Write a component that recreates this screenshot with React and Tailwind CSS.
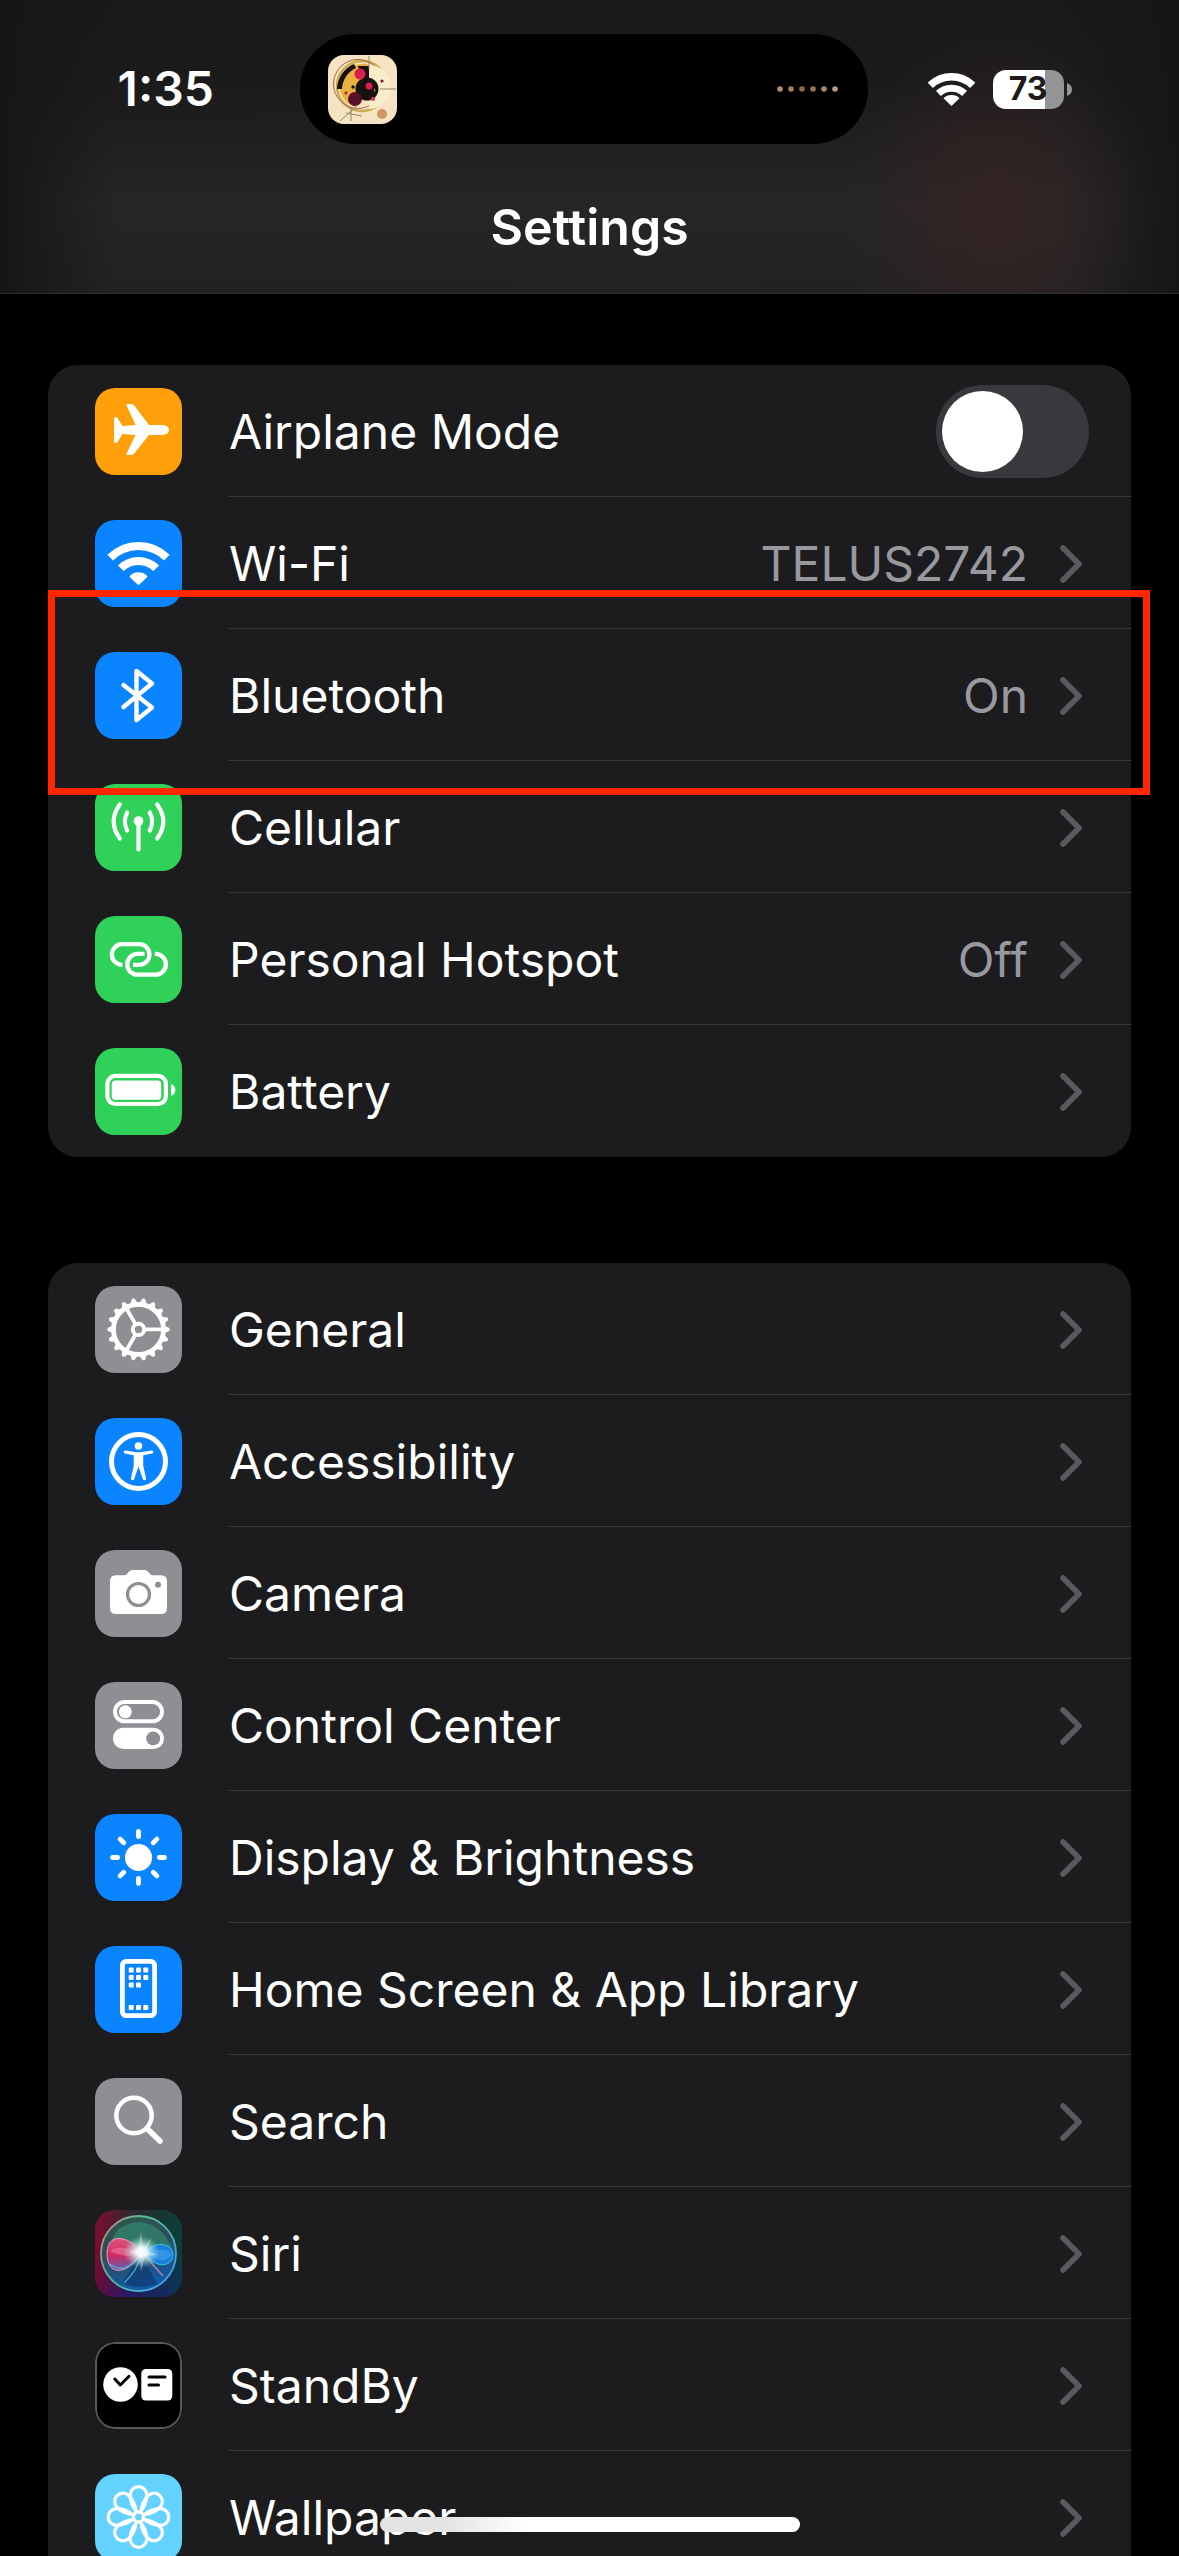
import { useState } from 'react';

const Glyph = ({ children }) => (
  <svg viewBox="0 0 87 87" fill="none" className="size-full" aria-hidden="true">
    {children}
  </svg>
);

const AirplaneIcon = () => (
  <Glyph>
    <path
      fill="#fff"
      d="M31.5 17.5Q30.8 16 33 16H36Q38 16 39.2 17.5L54 37H67Q74 37.5 74 42Q74 46.5 67 47H54L39.2 65.5Q38 67 36 67H33Q30.8 67 31.5 65.5L40.5 47L27.5 46L22.5 54Q21.8 55 20.5 55Q19 55 19 53.5V30.5Q19 29 20.5 29Q21.8 29 22.5 30L27.5 38L40.5 37Z"
    />
  </Glyph>
);

const WifiIcon = () => (
  <Glyph>
    <g stroke="#fff" strokeWidth="8">
      <path d="M15.2 37.7A40 40 0 0 1 71.8 37.7" />
      <path d="M25.8 48.3A25 25 0 0 1 61.2 48.3" />
    </g>
    <path
      fill="#fff"
      d="M42.3 64.3L34.8 57Q34.2 56.3 35 55.7Q38.5 52.3 43.5 52.3Q48.5 52.3 52 55.7Q52.8 56.3 52.2 57L44.7 64.3Q43.5 65.3 42.3 64.3Z"
    />
  </Glyph>
);

const BluetoothIcon = () => (
  <Glyph>
    <path
      stroke="#fff"
      strokeWidth="4.4"
      strokeLinecap="round"
      strokeLinejoin="round"
      d="M28.5 33L57 55.5L41.5 68V19L57 31.5L28.5 55"
    />
  </Glyph>
);

const CellularIcon = () => (
  <Glyph>
    <g stroke="#fff" strokeWidth="4.2" strokeLinecap="round">
      <path d="M32.2 28.5Q27.5 37.5 32.2 46.5" />
      <path d="M54.8 28.5Q59.5 37.5 54.8 46.5" />
      <path d="M24.8 20.5Q12.5 37.5 24.8 54.5" />
      <path d="M62.2 20.5Q74.5 37.5 62.2 54.5" />
      <path d="M43.5 37V65.5" />
    </g>
    <circle cx="43.5" cy="37" r="4.8" fill="#fff" />
  </Glyph>
);

const HotspotIcon = () => (
  <Glyph>
    <g stroke="#fff" strokeWidth="4.3">
      <path d="M27.5 48.8A10.3 10.3 0 0 1 26.8 28.2H44.2A10.3 10.3 0 0 1 44.2 48.8H38" />
      <path d="M49.5 37.9H42.6A10.4 10.4 0 0 0 42.6 58.7H60.5A10.4 10.4 0 0 0 60.5 37.9H59.8" />
    </g>
  </Glyph>
);

const BatteryIcon = () => (
  <Glyph>
    <rect x="12.4" y="27.8" width="58.5" height="28.2" rx="8" stroke="#fff" strokeWidth="4.2" />
    <rect x="16.7" y="32.5" width="49.5" height="19.3" rx="3.5" fill="#fff" />
    <path fill="#fff" d="M76 36Q80.3 37.5 80.3 41.9Q80.3 46.3 76 47.8Z" />
  </Glyph>
);

const GearIcon = () => (
  <Glyph>
    <g transform="translate(43.5 43.4)">
      {Array.from({ length: 18 }, (_, i) => (
        <path key={i} fill="#fff" d="M25-4L30.5-1.7Q32.2 0 30.5 1.7L25 4Z" transform={`rotate(${i * 20})`} />
      ))}
      <circle r="25" stroke="#fff" strokeWidth="4.8" />
      <circle r="5.7" stroke="#fff" strokeWidth="4" />
      {[0, 120, 240].map((a) => (
        <path key={a} d="M7 0H25" stroke="#fff" strokeWidth="3.8" transform={`rotate(${a})`} />
      ))}
    </g>
  </Glyph>
);

const AccessibilityIcon = () => (
  <Glyph>
    <circle cx="43.5" cy="43.5" r="27" stroke="#fff" strokeWidth="5" />
    <circle cx="43.5" cy="28" r="3.8" fill="#fff" />
    <path
      fill="#fff"
      d="M30.5 32.5L40 34Q43.5 34.5 47 34L56.5 32.5Q58.2 32.4 58.3 34Q58.3 35.3 57 35.6L48.3 37.3L48.2 47.5L51 60.5Q51.1 62 49.7 62.3Q48.4 62.5 47.9 61.2L43.5 48.5L39.1 61.2Q38.6 62.5 37.3 62.3Q35.9 62 36 60.5L38.8 47.5L38.7 37.3L30 35.6Q28.7 35.3 28.7 34Q28.8 32.4 30.5 32.5Z"
    />
  </Glyph>
);

const CameraIcon = () => (
  <Glyph>
    <path
      fill="#fff"
      d="M21 25.3H29Q31 25.3 32.2 23.8L34 21.6Q35.2 20 37.5 20H49.5Q51.8 20 53 21.6L54.8 23.8Q56 25.3 58 25.3H66Q72 25.3 72 31.3V58Q72 64 66 64H21Q15 64 15 58V31.3Q15 25.3 21 25.3Z"
    />
    <circle cx="43.5" cy="44.5" r="11" stroke="#8e8e93" strokeWidth="3.2" />
    <circle cx="63" cy="34.7" r="3" fill="#8e8e93" />
  </Glyph>
);

const ControlCenterIcon = () => (
  <Glyph>
    <rect x="20" y="20" width="47" height="19.3" rx="9.6" stroke="#fff" strokeWidth="4" />
    <circle cx="30.3" cy="29.8" r="6.5" fill="#fff" />
    <rect x="18" y="45.7" width="51" height="21.3" rx="10.6" fill="#fff" />
    <circle cx="58.2" cy="56.4" r="7" fill="#8e8e93" />
  </Glyph>
);

const BrightnessIcon = () => (
  <Glyph>
    <g transform="translate(43.5 43.5)">
      <circle r="13.6" fill="#fff" />
      {[0, 45, 90, 135, 180, 225, 270, 315].map((a) => (
        <path key={a} d="M20.8 0H26" stroke="#fff" strokeWidth="4.8" strokeLinecap="round" transform={`rotate(${a})`} />
      ))}
    </g>
  </Glyph>
);

const HomeScreenIcon = () => {
  const dots = [
    [0, 0], [1, 0], [2, 0],
    [0, 1], [1, 1], [2, 1],
    [0, 2], [1, 2],
    [0, 5], [1, 5], [2, 5],
  ];
  return (
    <Glyph>
      <rect x="27.4" y="15.4" width="32.2" height="54.3" rx="4" stroke="#fff" strokeWidth="4.8" />
      {dots.map(([c, r]) => (
        <rect key={`${c}-${r}`} x={33.7 + c * 7.3} y={21.5 + r * 7.5} width="5" height="5" rx="1" fill="#fff" />
      ))}
    </Glyph>
  );
};

const SearchIcon = () => (
  <Glyph>
    <circle cx="39" cy="37.5" r="17.7" stroke="#fff" strokeWidth="4.5" />
    <path d="M52 50.5L65 63" stroke="#fff" strokeWidth="5.5" strokeLinecap="round" />
  </Glyph>
);

const SiriIcon = () => (
  <Glyph>
    <defs>
      <linearGradient id="siriTop" x1="0" x2="1">
        <stop offset="0" stopColor="#7c0c30" />
        <stop offset=".45" stopColor="#2d2a30" />
        <stop offset="1" stopColor="#0a3f37" />
      </linearGradient>
      <linearGradient id="siriBottom" x1="0" x2="1">
        <stop offset="0" stopColor="#6a0a3c" />
        <stop offset=".4" stopColor="#221c66" />
        <stop offset="1" stopColor="#0b3358" />
      </linearGradient>
      <linearGradient id="siriFade" x2="0" y2="1">
        <stop offset=".4" stopColor="#fff" stopOpacity="0" />
        <stop offset=".95" stopColor="#fff" />
      </linearGradient>
      <mask id="siriMask">
        <rect width="87" height="87" fill="url(#siriFade)" />
      </mask>
      <linearGradient id="siriRing" x2="1" y2=".6">
        <stop offset="0" stopColor="#d08080" />
        <stop offset=".45" stopColor="#4fc09a" />
        <stop offset="1" stopColor="#4aa3e0" />
      </linearGradient>
      <linearGradient id="siriOrb" x2=".3" y2="1">
        <stop offset="0" stopColor="#2c5a4c" />
        <stop offset=".5" stopColor="#2f4c58" />
        <stop offset="1" stopColor="#1359a4" />
      </linearGradient>
      <radialGradient id="siriGlow">
        <stop offset="0" stopColor="#fff" />
        <stop offset=".28" stopColor="#effcff" stopOpacity=".95" />
        <stop offset="1" stopColor="#9ff0e0" stopOpacity="0" />
      </radialGradient>
      <linearGradient id="siriPink" x2="0" y2="1">
        <stop offset="0" stopColor="#e0557a" />
        <stop offset=".55" stopColor="#c92b66" />
        <stop offset="1" stopColor="#5f5fae" />
      </linearGradient>
    </defs>
    <rect width="87" height="87" fill="url(#siriTop)" />
    <rect width="87" height="87" fill="url(#siriBottom)" mask="url(#siriMask)" />
    <circle cx="43.5" cy="43.5" r="37.5" fill="url(#siriOrb)" stroke="url(#siriRing)" strokeWidth="1.8" />
    <path d="M16 32Q22 13 44 12Q66 13 77 38Q60 30 46 43Q32 24 16 32Z" fill="#35a77d" opacity=".45" />
    <path d="M46 44L62 74Q44 80 27 73Z" fill="#0c3564" opacity=".6" />
    <path d="M46 43C40 30 13 18 12 43C12 70 36 62 46 43Z" fill="url(#siriPink)" stroke="#f39ab5" strokeWidth="1" />
    <path d="M15 41C24 35 37 38 46 43C34 48 24 46 15 41Z" fill="#ff8fb0" opacity=".45" />
    <path d="M50 43C58 31 77 32 78 44C78 59 58 58 50 43Z" fill="#1c7fdc" stroke="#39c7e8" strokeWidth="1" />
    <path d="M56 44C63 38 72 39 77 44C72 52 62 52 56 44Z" fill="#4aa8f5" opacity=".5" />
    <path d="M15 54Q30 66 46 44Q43 60 29 73" stroke="#57b5dc" strokeWidth="1.4" opacity=".8" />
    <path d="M50 46L68 66L55 51Z" stroke="#b985b6" strokeWidth="1.8" opacity=".8" />
    <ellipse cx="46.5" cy="42" rx="18" ry="16" fill="url(#siriGlow)" />
    <path d="M46 21L48.5 38L57 27L51 41L62 45L50 46L46 62L44 46L34 42L43 39Z" fill="#fff" opacity=".3" />
  </Glyph>
);

const StandByIcon = () => (
  <Glyph>
    <rect x="1" y="1" width="85" height="85" rx="19" stroke="#58585b" strokeWidth="2" />
    <circle cx="25.5" cy="42.5" r="17.3" fill="#fff" />
    <path d="M19.8 37L25.3 43L34 34.3" stroke="#000" strokeWidth="3" strokeLinecap="round" strokeLinejoin="round" />
    <rect x="46.3" y="27" width="31" height="31.5" rx="4.5" fill="#fff" />
    <path d="M54 35H70M54 43H63.5" stroke="#000" strokeWidth="3" strokeLinecap="round" />
  </Glyph>
);

const WallpaperIcon = () => (
  <Glyph>
    <g transform="translate(43.5 43)" stroke="#fff" strokeWidth="3.2">
      {[0, 45, 90, 135, 180, 225, 270, 315].map((a) => (
        <path key={a} d="M-1.5-5C-6-10-8.3-16-8.3-22A8.3 8.3 0 0 1 8.3-22C8.3-16 6-10 1.5-5" transform={`rotate(${a})`} />
      ))}
      <circle r="5" />
    </g>
  </Glyph>
);

const Chevron = () => (
  <svg width="22" height="38" viewBox="0 0 22 38" fill="none" aria-hidden="true">
    <path d="M3 3L19 19L3 35" stroke="#5a5a5e" strokeWidth="5.6" strokeLinecap="round" strokeLinejoin="round" />
  </svg>
);

const connectivity = [
  { label: 'Wi-Fi', value: 'TELUS2742', icon: WifiIcon, tile: 'bg-[#0a84ff]' },
  { label: 'Bluetooth', value: 'On', icon: BluetoothIcon, tile: 'bg-[#0a84ff]', highlighted: true },
  { label: 'Cellular', icon: CellularIcon, tile: 'bg-[#30d158]' },
  { label: 'Personal Hotspot', value: 'Off', icon: HotspotIcon, tile: 'bg-[#30d158]' },
  { label: 'Battery', icon: BatteryIcon, tile: 'bg-[#30d158]' },
];

const system = [
  { label: 'General', icon: GearIcon, tile: 'bg-[#8e8e93]' },
  { label: 'Accessibility', icon: AccessibilityIcon, tile: 'bg-[#0a84ff]' },
  { label: 'Camera', icon: CameraIcon, tile: 'bg-[#8e8e93]' },
  { label: 'Control Center', icon: ControlCenterIcon, tile: 'bg-[#8e8e93]' },
  { label: 'Display & Brightness', icon: BrightnessIcon, tile: 'bg-[#0a84ff]' },
  { label: 'Home Screen & App Library', icon: HomeScreenIcon, tile: 'bg-[#0a84ff]' },
  { label: 'Search', icon: SearchIcon, tile: 'bg-[#8e8e93]' },
  { label: 'Siri', icon: SiriIcon, tile: 'bg-[#14343c]' },
  { label: 'StandBy', icon: StandByIcon, tile: 'bg-black' },
  { label: 'Wallpaper', icon: WallpaperIcon, tile: 'bg-[#64d2ff]' },
];

const IconTile = ({ icon: Icon, tile }) => (
  <div className={`size-[87px] shrink-0 overflow-hidden rounded-[20px] ${tile}`}>
    <Icon />
  </div>
);

const Row = ({ item }) => (
  <li className="group relative">
    <a href={`#${item.label}`} className="flex h-33 items-center gap-[47px] pl-[47px]">
      <IconTile icon={item.icon} tile={item.tile} />
      <div className="flex h-full flex-1 items-center border-b border-[#3a3a3c] pt-0.5 pr-[49px] group-last:border-transparent">
        <span className="flex-1 whitespace-nowrap">{item.label}</span>
        {item.value && <span className="mr-8 text-[#98989f]">{item.value}</span>}
        <Chevron />
      </div>
    </a>
    {item.highlighted && (
      <div className="pointer-events-none absolute -top-[39px] right-[-19px] -bottom-[34px] left-0 z-10 border-[7px] border-[#ff2600]" />
    )}
  </li>
);

const AirplaneRow = () => {
  const [on, setOn] = useState(false);

  return (
    <li>
      <label className="flex h-33 items-center gap-[47px] pl-[47px]">
        <IconTile icon={AirplaneIcon} tile="bg-[#ff9f0a]" />
        <div className="flex h-full flex-1 items-center border-b border-[#3a3a3c] pt-0.5 pr-[42px]">
          <span className="flex-1">Airplane Mode</span>
          <input
            type="checkbox"
            role="switch"
            checked={on}
            onChange={(e) => setOn(e.target.checked)}
            className="h-[93px] w-[153px] appearance-none rounded-full bg-[#39393d] p-1.5 before:block before:size-[81px] before:rounded-full before:bg-white checked:bg-[#30d158] checked:before:translate-x-[60px]"
          />
        </div>
      </label>
    </li>
  );
};

const AlbumArt = () => (
  <svg viewBox="0 0 69 69" fill="none" className="size-[69px] rounded-2xl bg-[#f6e3c1]" aria-hidden="true">
    <circle cx="34" cy="31" r="25" stroke="#c9ad4f" strokeWidth="2.5" />
    <circle cx="30" cy="29" r="24.5" stroke="#b0604f" strokeWidth="1" />
    <path d="M41 10V31L27 52A22 22 0 0 1 41 10Z" fill="#e8b040" />
    <path d="M9 34A28 28 0 0 1 26 9L28 13A24 24 0 0 0 14 34Z" fill="#17120f" />
    <path d="M41 10V54A22 22 0 0 0 41 10Z" fill="#f8ecc9" />
    <path d="M30 11H41V24H34Z" fill="#17120f" />
    <circle cx="39" cy="34" r="11.5" fill="#17120f" />
    <circle cx="32" cy="19" r="5.5" fill="#d91f4e" />
    <circle cx="41" cy="31" r="3.5" fill="#d91f4e" />
    <circle cx="45.5" cy="35.5" r="1.8" fill="#e8b98a" />
    <circle cx="27" cy="44" r="7" fill="#5a1029" />
    <path d="M32 44L46 32L47 44Z" fill="#17120f" />
    <circle cx="45" cy="44" r="2" fill="#e0335a" />
    <circle cx="54" cy="26" r="1.6" fill="#7c1b30" />
    <circle cx="25" cy="32" r="1.7" fill="#17120f" />
    <circle cx="18" cy="38" r="1.7" fill="#b53a2e" />
    <circle cx="54" cy="59" r="5" fill="#cf9668" />
    <path d="M12 66L30 50M23 66V52M18 58L34 61M41 1V14M52 34H68" stroke="#8b8866" strokeWidth="1" />
  </svg>
);

const DynamicIsland = () => (
  <div className="flex h-[110px] w-[568px] items-center justify-between rounded-full bg-black pr-[29px] pl-7">
    <AlbumArt />
    <svg width="62" height="8" viewBox="0 0 62 8" aria-hidden="true">
      {['#b98d66', '#a97f5a', '#94693f', '#9a7154', '#a58871', '#b09a80'].map((color, i) => (
        <circle key={i} cx={3 + i * 11} cy="4" r="2.8" fill={color} />
      ))}
    </svg>
  </div>
);

const StatusBar = () => (
  <div className="grid grid-cols-[1fr_auto_1fr] items-center pt-[34px] pr-3">
    <div className="pl-8 text-center text-[48px] leading-none font-semibold">1:35</div>
    <DynamicIsland />
    <div className="flex items-center pl-15">
      <svg width="47" height="36" viewBox="0 0 47 36" fill="none" aria-label="Wi-Fi">
        <path d="M2.3 14.3A30.5 30.5 0 0 1 44.7 14.3" stroke="#fff" strokeWidth="7.5" />
        <path d="M10.4 22.4A19 19 0 0 1 36.6 22.4" stroke="#fff" strokeWidth="7" />
        <path d="M23.5 35L15.5 27.3Q18.5 24 23.5 24Q28.5 24 31.5 27.3Z" fill="#fff" />
      </svg>
      <div className="ml-[18px] flex h-[39px] w-[71px] items-center justify-center rounded-[13px] bg-linear-to-r from-white from-73% to-[#969595] to-73% text-[32px] leading-none font-bold text-[#1c1a1a]">
        73
      </div>
      <svg width="5" height="13" viewBox="0 0 5 13" className="ml-[3px]" aria-hidden="true">
        <path d="M0 0Q5 2 5 6.5Q5 11 0 13Z" fill="#969595" />
      </svg>
    </div>
  </div>
);

export default function App() {
  return (
    <div className="relative h-screen overflow-hidden bg-black font-[Inter,sans-serif] text-[48px] leading-none text-white">
      <header className="h-[294px] border-b border-[#2c2c2e] bg-[radial-gradient(ellipse_150px_190px_at_84.5%_72%,#382422cc,transparent),linear-gradient(to_right,#161617,transparent_10%,transparent_90%,#161617),linear-gradient(#191919,#1b1b1c_30%,#262628_70%,#222224)]">
        <StatusBar />
        <h1 className="mt-[58px] text-center text-[50px] leading-none font-semibold">Settings</h1>
      </header>

      <main className="flex flex-col gap-[106px] px-12 pt-[71px]">
        <ul className="rounded-[30px] bg-[#1c1c1e]">
          <AirplaneRow />
          {connectivity.map((item) => (
            <Row key={item.label} item={item} />
          ))}
        </ul>
        <ul className="rounded-[30px] bg-[#1c1c1e]">
          {system.map((item) => (
            <Row key={item.label} item={item} />
          ))}
        </ul>
      </main>

      {/* Home indicator */}
      <div className="absolute bottom-6 left-1/2 z-20 h-[15px] w-[420px] -translate-x-1/2 rounded-full bg-linear-to-r from-[#e3e3e3] from-15% to-white to-35%" />
    </div>
  );
}
